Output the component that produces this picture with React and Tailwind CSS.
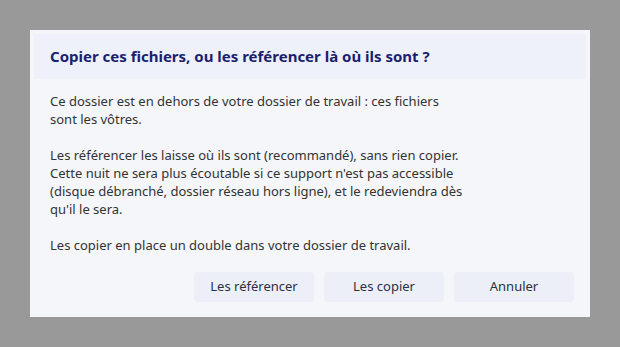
import React from "react";

const buttons = ["Les référencer", "Les copier", "Annuler"];

export default function App() {
  return (
    <div
      className="w-[620px] h-[347px] bg-[#999999] pt-[30px] pl-[30px]"
      style={{ fontFamily: '"Noto Sans", sans-serif' }}
    >
      <div className="w-[560px] h-[287px] bg-[#f5f6f9] p-1 flex flex-col">
        <div className="h-[45px] bg-[#eef1fa] flex items-center px-4">
          <h1 className="text-[15px] font-bold text-[#1a1f70]">
            Copier ces fichiers, ou les référencer là où ils sont ?
          </h1>
        </div>
        <div className="px-4 pt-[13px] text-[13px] leading-[18px] text-[#333333] max-w-[480px] flex flex-col gap-[18px]">
          <p>
            Ce dossier est en dehors de votre dossier de travail : ces fichiers
            <br />
            sont les vôtres.
          </p>
          <p>
            Les référencer les laisse où ils sont (recommandé), sans rien copier.
            <br />
            Cette nuit ne sera plus écoutable si ce support n'est pas accessible
            <br />
            (disque débranché, dossier réseau hors ligne), et le redeviendra dès
            <br />
            qu'il le sera.
          </p>
          <p>Les copier en place un double dans votre dossier de travail.</p>
        </div>
        <div className="mt-auto flex justify-end gap-[10px] pr-3 pb-[11px]">
          {buttons.map((b) => (
            <button
              key={b}
              className="w-[120px] h-[30px] rounded bg-[#eceff8] text-[13px] text-[#2b3045]"
            >
              {b}
            </button>
          ))}
        </div>
      </div>
    </div>
  );
}
